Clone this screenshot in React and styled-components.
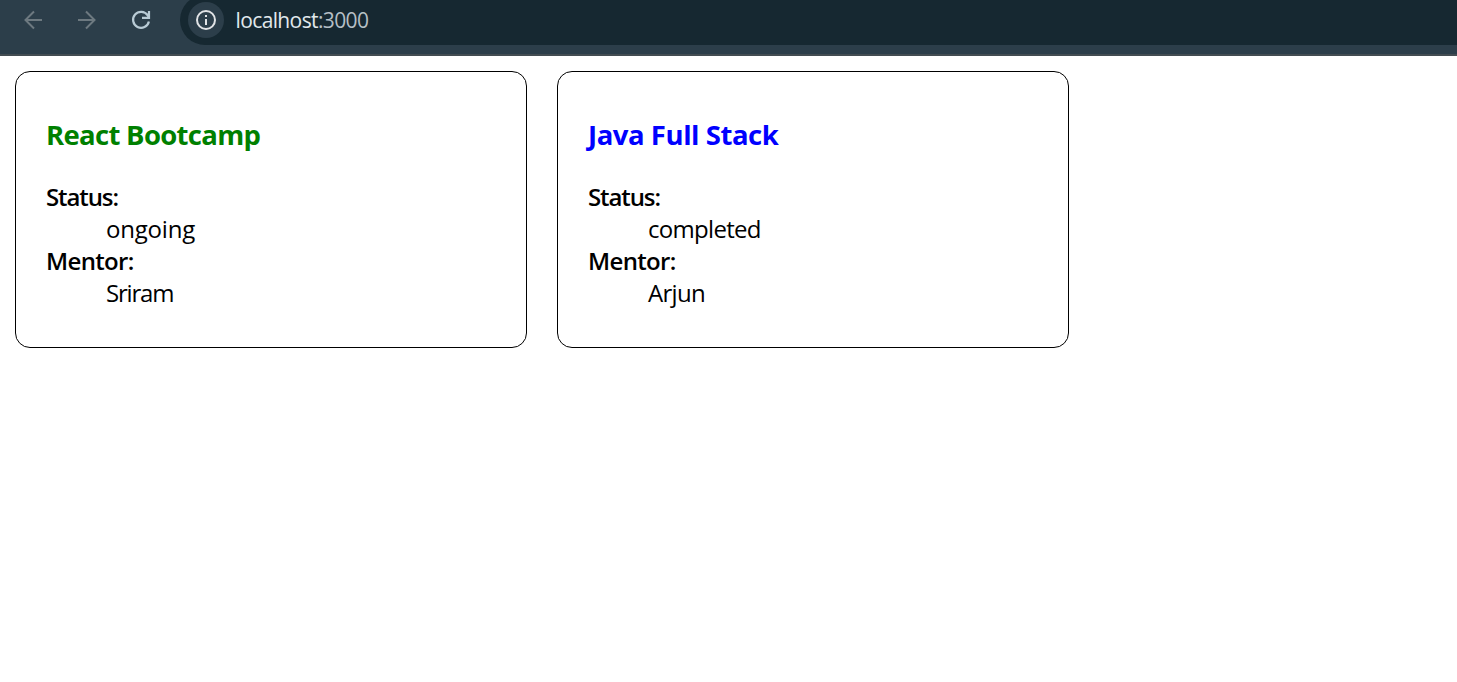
import React from "react";
import styled, { createGlobalStyle } from "styled-components";

const Global = createGlobalStyle`
  * { box-sizing: border-box; }
  body { margin: 0; background: #fff; overflow: hidden; font-family: "Open Sans", "Noto Sans", sans-serif; }
`;
const Toolbar = styled.header`
  display: flex; height: 56px; background: #2c3e4a; border-bottom: 2px solid #434c52; overflow: hidden;
`;
const Nav = styled.nav`
  display: flex; width: 180px; height: 40px; padding-left: 20px; gap: 28px; align-items: center;
`;
const Icon = styled.svg`
  width: 26px; height: 26px; flex: none; fill: none;
  stroke: ${p => p.$color}; stroke-width: ${p => p.$weight || 2};
`;
const Address = styled.div`
  display: flex; flex: 1; height: 50px; margin-top: -5px; padding-left: 8px; align-items: center;
  background: #162831; border-radius: 25px 0 0 25px;
`;
const Info = styled.span`
  display: flex; width: 36px; height: 36px; border-radius: 50%; background: #2c3e4a;
  align-items: center; justify-content: center;
`;
const Url = styled.span`
  margin: -1px 0 0 11.5px; font-size: 21px; line-height: 28px; letter-spacing: -0.62px; color: #e1e8ec; white-space: nowrap;
`;
const Port = styled.span`color: #b5bfc5;`;
const Cards = styled.main`display: flex; gap: 30px; padding: 15px;`;
const Card = styled.section`
  width: 512px; height: 277px; padding: 0 30px; border: 1px solid #000; border-radius: 15px;
`;
const Title = styled.h3`
  margin: 45px 0 28px; font-size: 27.5px; line-height: 36px; font-weight: 700;
  letter-spacing: ${p => p.$track}px; color: ${p => p.$color};
`;
const Details = styled.dl`margin: 0; font-size: 24px; line-height: 32px; color: #000;`;
const Term = styled.dt`font-weight: 600; letter-spacing: ${p => p.$track}px;`;
const Value = styled.dd`margin: 0 0 0 60px; letter-spacing: ${p => p.$track}px;`;

const courses = [
  { title: "React Bootcamp", color: "#008000", track: -0.69, status: "ongoing", statusTrack: -0.2, mentor: "Sriram", mentorTrack: -1.2 },
  { title: "Java Full Stack", color: "#0000ff", track: -0.45, status: "completed", statusTrack: -0.7, mentor: "Arjun", mentorTrack: -0.7 },
];

export default function App() {
  return <>
    <Global />
    <Toolbar>
      <Nav>
        <Icon $color="#6d7980" viewBox="0 0 26 26"><path d="M22 13H5.5M14 4.5L5.5 13l8.5 8.5" /></Icon>
        <Icon $color="#6d7980" viewBox="0 0 26 26"><path d="M4 13h16.5M12 4.5l8.5 8.5-8.5 8.5" /></Icon>
        <Icon $color="#b9cbd5" $weight={2.2} viewBox="0 0 26 26"><path d="M20.9 14.5a8 8 0 1 1-1.2-6.2L21 10M21 4v6.8H14" /></Icon>
      </Nav>
      <Address>
        <Info><Icon $color="#e1e3e6" viewBox="0 0 26 26"><circle cx="13" cy="13" r="9" /><path d="M13 12v6M13 8v2" /></Icon></Info>
        <Url>localhost<Port>:3000</Port></Url>
      </Address>
    </Toolbar>
    <Cards>
      {courses.map(c => <Card key={c.title}>
        <Title $color={c.color} $track={c.track}>{c.title}</Title>
        <Details>
          <Term $track={-1.1}>Status:</Term><Value $track={c.statusTrack}>{c.status}</Value>
          <Term $track={-0.65}>Mentor:</Term><Value $track={c.mentorTrack}>{c.mentor}</Value>
        </Details>
      </Card>)}
    </Cards>
  </>;
}
